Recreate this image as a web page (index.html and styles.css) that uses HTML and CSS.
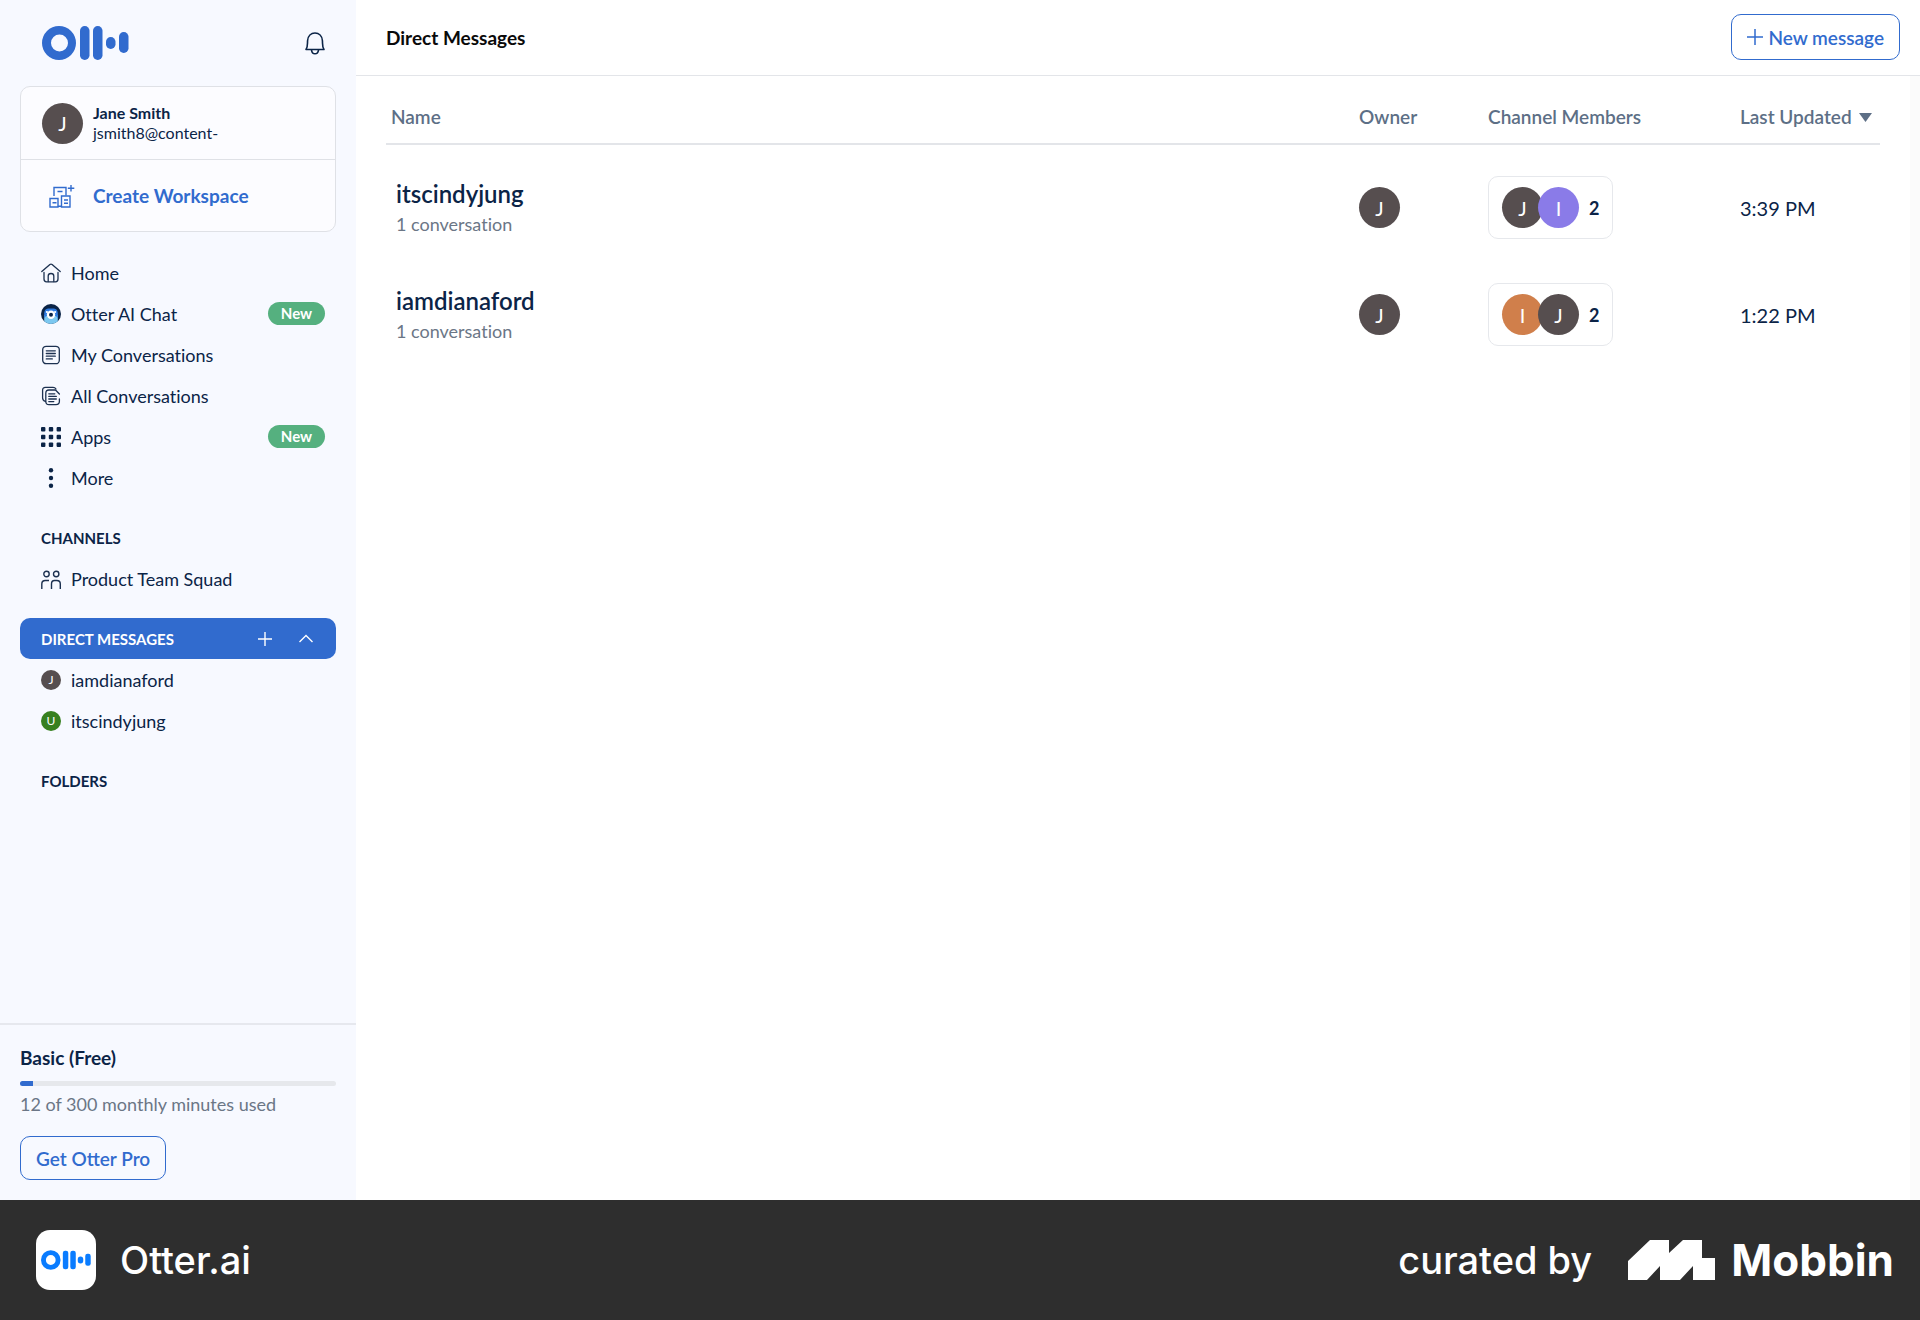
FILE: index.html
```html
<!DOCTYPE html>
<html lang="en">
<head>
  <meta charset="UTF-8" />
  <meta name="viewport" content="width=device-width, initial-scale=1" />
  <title>Direct Messages - Otter.ai</title>
  <link rel="stylesheet" href="styles.css">
</head>
<body>

<div class="app">
  <aside class="sidebar">
    <div class="sidebar-top">
      <a href="#" class="logo" aria-label="Otter">
        <svg width="87" height="34" viewBox="0 0 87 34" fill="#316bce">
          <path fill-rule="evenodd" d="M17 0a17 17 0 1 0 0 34a17 17 0 1 0 0-34zM17.500 8.500a8.500 8.500 0 1 1 0 17a8.500 8.500 0 1 1 0-17z"/>
          <rect x="38" y="0" width="9.500" height="34" rx="4.700"/>
          <rect x="51" y="0" width="9.500" height="34" rx="4.700"/>
          <rect x="64" y="11" width="9.500" height="12" rx="4.700"/>
          <rect x="77" y="6" width="9.500" height="21" rx="4.700"/>
        </svg>
      </a>
      <button class="icon-btn" aria-label="Notifications">
        <svg width="22" height="24" viewBox="0 0 22 24" fill="none" stroke="#0b2447" stroke-width="1.600" stroke-linejoin="round">
          <path d="M2 18.500C4 15.500 3.300 12.500 3.600 9.500C4 5 7 2 11 2S18 5 18.400 9.500C18.700 12.500 18 15.500 20 18.500Z"/>
          <path d="M7.500 19c.3 2.600 1.700 3.800 3.500 3.800s3.200-1.200 3.500-3.800"/>
        </svg>
      </button>
    </div>

    <div class="account">
      <div class="account-user">
        <span class="avatar">J</span>
        <div class="account-text">
          <strong>Jane Smith</strong>
          <span>jsmith8@content-</span>
        </div>
      </div>
      <a href="#" class="create-workspace">
        <svg width="26" height="24" viewBox="0 0 26 24" fill="none" stroke="#316bce" stroke-width="1.400">
          <path d="M5 12V3.500h12v8M8.500 7.500h5M22 1v6.500M18.800 4.200h6.500"/>
          <path d="M1 14.500h8V23H1zM3.500 18.800h4M12.500 12h8.500v11h-8.500zM15 16h4M15 19.300h4M9 22.300h4"/>
        </svg>
        Create Workspace
      </a>
    </div>

    <nav class="nav">
      <a href="#" class="nav-item">
        <svg width="20" height="20" viewBox="0 0 20 20" fill="none" stroke="#1c3150" stroke-width="1.300" stroke-linecap="round" stroke-linejoin="round">
          <path d="M.8 8.500L8.900 1.500q1.100-.9 2.200 0L19.200 8.500"/>
          <path d="M3 9.500V16q0 2.800 2.500 2.800h9Q17 18.800 17 16V9.500"/>
          <path d="M7.200 18.500V13q0-2.500 2.800-2.500t2.800 2.500v5.500"/>
        </svg>
        Home
      </a>
      <a href="#" class="nav-item">
        <svg width="20" height="20" viewBox="0 0 20 20">
          <circle cx="10" cy="10" r="10" fill="#0b2447"/>
          <path d="M3.200 17.300V11h13.600v6.300Q14 20 10 20t-6.800-2.700z" fill="#7cc8f0"/>
          <path d="M3.200 14V9Q3.500 5 7 4.600h6Q16.500 5 16.800 9v5q-1.500-2.500-3.500-2.500H6.700Q4.700 11.500 3.200 14z" fill="#2f7be0"/>
          <circle cx="5.900" cy="8" r="1.100" fill="#fff"/>
          <circle cx="14.100" cy="8" r="1.100" fill="#fff"/>
          <circle cx="10" cy="10.800" r="4.200" fill="#fff"/>
          <circle cx="10" cy="10.800" r="2" fill="#0b2447"/>
        </svg>
        Otter AI Chat
        <span class="badge">New</span>
      </a>
      <a href="#" class="nav-item">
        <svg width="20" height="20" viewBox="0 0 20 20" fill="none" stroke="#1c3150" stroke-width="1.300" stroke-linecap="round">
          <rect x="1.700" y="1.300" width="16.600" height="17.400" rx="3.500"/>
          <path d="M5.300 5.800h9M5.300 8.500h9M5.300 11.200h9M5.300 13.900h6"/>
        </svg>
        My Conversations
      </a>
      <a href="#" class="nav-item">
        <svg width="20" height="20" viewBox="0 0 20 20" fill="none" stroke="#1c3150" stroke-width="1.300" stroke-linecap="round" stroke-linejoin="round">
          <path d="M4.500 15.500Q1.600 14.500 1.600 12V4.200Q1.600 1.300 4.500 1.300H12q2 0 3 1.700"/>
          <path d="M18.400 13v2.300q0 3.400-3.400 3.400H8q-3.200 0-3.200-3.400V7.200Q4.800 4 8 4h6.500l3.900 4"/>
          <path d="M7.800 7.800h6M7.800 10.400h7.500M7.800 13h7.500M7.800 15.600h5"/>
        </svg>
        All Conversations
      </a>
      <a href="#" class="nav-item">
        <svg width="20" height="20" viewBox="0 0 20 20" fill="#0b2447">
          <rect x="0" y="0" width="4.400" height="4.400" rx="1"/><rect x="7.800" y="0" width="4.400" height="4.400" rx="1"/><rect x="15.600" y="0" width="4.400" height="4.400" rx="1"/>
          <rect x="0" y="7.800" width="4.400" height="4.400" rx="1"/><rect x="7.800" y="7.800" width="4.400" height="4.400" rx="1"/><rect x="15.600" y="7.800" width="4.400" height="4.400" rx="1"/>
          <rect x="0" y="15.600" width="4.400" height="4.400" rx="1"/><rect x="7.800" y="15.600" width="4.400" height="4.400" rx="1"/><rect x="15.600" y="15.600" width="4.400" height="4.400" rx="1"/>
        </svg>
        Apps
        <span class="badge">New</span>
      </a>
      <a href="#" class="nav-item">
        <svg width="20" height="20" viewBox="0 0 20 20" fill="#0b2447">
          <circle cx="10" cy="2.200" r="2.200"/><circle cx="10" cy="10" r="2.200"/><circle cx="10" cy="17.800" r="2.200"/>
        </svg>
        More
      </a>
    </nav>

    <section class="nav-section">
      <h2 class="section-title">CHANNELS</h2>
      <a href="#" class="nav-item">
        <svg width="20" height="20" viewBox="0 0 20 20" fill="none" stroke="#1c3150" stroke-width="1.400">
          <circle cx="5.500" cy="5" r="2.700"/>
          <circle cx="15.200" cy="5" r="2.700"/>
          <path d="M.8 20v-5Q.8 11.500 4.300 11.500H8M10.500 20v-5Q10.500 11.500 13.500 11.500h2.300q3.500 0 3.500 3.500V20"/>
        </svg>
        Product Team Squad
      </a>
    </section>

    <section class="nav-section">
      <div class="section-title active">
        <h2>DIRECT MESSAGES</h2>
        <button class="icon-btn" aria-label="Add direct message">
          <svg width="16" height="16" viewBox="0 0 16 16" stroke="#fff" stroke-width="1.400"><path d="M8 1v14M1 8h14"/></svg>
        </button>
        <button class="icon-btn" aria-label="Collapse">
          <svg width="16" height="16" viewBox="0 0 16 16" fill="none" stroke="#fff" stroke-width="1.400"><path d="M1.500 11L8 4.500L14.500 11"/></svg>
        </button>
      </div>
      <a href="#" class="nav-item"><span class="avatar small">J</span>iamdianaford</a>
      <a href="#" class="nav-item"><span class="avatar small green">U</span>itscindyjung</a>
    </section>

    <section class="nav-section">
      <h2 class="section-title">FOLDERS</h2>
    </section>

    <div class="plan">
      <h3>Basic (Free)</h3>
      <div class="progress" role="progressbar" aria-label="Minutes used" aria-valuenow="12" aria-valuemax="300">
        <div class="progress-fill" style="width: 4%"></div>
      </div>
      <p>12 of 300 monthly minutes used</p>
      <button class="btn">Get Otter Pro</button>
    </div>
  </aside>

  <main class="main">
    <header class="main-header">
      <h1>Direct Messages</h1>
      <button class="btn btn-new">
        <svg width="16" height="16" viewBox="0 0 16 16" stroke="#316bce" stroke-width="1.500"><path d="M8 0v16M0 8h16"/></svg>
        New message
      </button>
    </header>

    <div class="content">
      <table class="channels">
        <thead>
          <tr>
            <th class="col-name">Name</th>
            <th class="col-owner">Owner</th>
            <th class="col-members">Channel Members</th>
            <th class="col-updated">Last Updated <svg width="13" height="9" viewBox="0 0 13 9" fill="#5d6f86"><path d="M0 0h13L6.500 9z"/></svg></th>
          </tr>
        </thead>
        <tbody>
          <tr>
            <td class="name">
              <a href="#">itscindyjung</a>
              <span>1 conversation</span>
            </td>
            <td><span class="avatar">J</span></td>
            <td>
              <div class="members"><span class="avatar">J</span><span class="avatar purple">I</span><b>2</b></div>
            </td>
            <td class="time">3:39 PM</td>
          </tr>
          <tr>
            <td class="name">
              <a href="#">iamdianaford</a>
              <span>1 conversation</span>
            </td>
            <td><span class="avatar">J</span></td>
            <td>
              <div class="members"><span class="avatar orange">I</span><span class="avatar">J</span><b>2</b></div>
            </td>
            <td class="time">1:22 PM</td>
          </tr>
        </tbody>
      </table>
    </div>
  </main>
</div>

<footer class="footer">
  <div class="app-icon">
    <svg width="50" height="20" viewBox="0 0 87 34" fill="#0a7cff">
      <path fill-rule="evenodd" d="M17 0a17 17 0 1 0 0 34a17 17 0 1 0 0-34zM17 8.500a8.500 8.500 0 1 1 0 17a8.500 8.500 0 1 1 0-17z"/>
      <rect x="38" y="1" width="9.500" height="32" rx="4"/>
      <rect x="51" y="1" width="9.500" height="32" rx="4"/>
      <rect x="64" y="11" width="9.500" height="12" rx="4.700"/>
      <rect x="77" y="6" width="9.500" height="21" rx="4"/>
    </svg>
  </div>
  <span class="app-name">Otter.ai</span>
  <span class="curated">curated by</span>
  <svg width="87" height="40" viewBox="0 0 87 40" fill="#fff">
    <path d="M0 21L22 0H41V13L55 0H74V18H87V40H65V26L52 40H32V26L19 40H0Z"/>
  </svg>
  <span class="mobbin">Mobbin</span>
</footer>

</body>
</html>
```
FILE: styles.css
```css
* {
  box-sizing: border-box;
}
body {
  margin: 0;
  min-height: 100vh;
  display: flex;
  flex-direction: column;
  font-family: Lato, 'Open Sans', sans-serif;
  font-size: 18px;
  font-variant-ligatures: none;
  color: #0b2447;
  background: #fff;
}
h1, h2, h3, p {
  margin: 0;
}
a {
  color: inherit;
  text-decoration: none;
}
button {
  font-family: inherit;
  cursor: pointer;
}
svg {
  display: block;
  flex-shrink: 0;
}
.app {
  flex: 1;
  display: flex;
}

/* Sidebar */
.sidebar {
  width: 356px;
  flex-shrink: 0;
  display: flex;
  flex-direction: column;
  background: #f7f9ff;
}
.sidebar-top {
  display: flex;
  align-items: center;
  justify-content: space-between;
  height: 86px;
  padding: 0 30px 0 42px;
}
.icon-btn {
  padding: 0;
  border: none;
  background: none;
}
.account {
  margin: 0 20px;
  border: 1px solid #dfe1e6;
  border-radius: 10px;
  background: #fcfcff;
}
.account-user {
  display: flex;
  align-items: center;
  gap: 10px;
  height: 73px;
  padding: 0 21px;
  border-bottom: 1px solid #dfe1e6;
}
.account-text {
  display: flex;
  flex-direction: column;
  font-size: 16px;
  line-height: 20px;
}
.create-workspace {
  display: flex;
  align-items: center;
  gap: 18px;
  height: 71px;
  padding: 0 28px;
  color: #316bce;
  font-size: 19px;
  font-weight: 700;
}
.avatar {
  display: flex;
  align-items: center;
  justify-content: center;
  width: 41px;
  height: 41px;
  flex-shrink: 0;
  border-radius: 50%;
  background: #564e4f;
  color: #fff;
  font-size: 20px;
}
.avatar.small {
  width: 20px;
  height: 20px;
  font-size: 12px;
}
.avatar.green {
  background: #37801f;
}
.avatar.purple {
  background: #8a7be8;
}
.avatar.orange {
  background: #d07f4b;
}
.nav {
  margin-top: 20px;
}
.nav-item {
  display: flex;
  align-items: center;
  gap: 10px;
  height: 41px;
  padding: 0 31px 0 41px;
}
.badge {
  margin-left: auto;
  width: 57px;
  border-radius: 12px;
  background: #55b07f;
  color: #fff;
  font-size: 15px;
  font-weight: 700;
  line-height: 23px;
  text-align: center;
}
.nav-section {
  margin-top: 19px;
}
.section-title {
  display: flex;
  align-items: center;
  height: 41px;
  margin: 0 20px;
  padding: 0 21px;
  font-size: 15px;
  font-weight: 700;
}
.section-title h2 {
  flex: 1;
  font-size: 15px;
  font-weight: 700;
}
.section-title.active {
  gap: 25px;
  padding-right: 22px;
  border-radius: 10px;
  background: #316bce;
  color: #fff;
}
.plan {
  margin-top: auto;
  padding: 20px;
  border-top: 2px solid #e6e8ee;
}
.plan h3 {
  font-size: 19px;
  line-height: 26px;
}
.progress {
  height: 5px;
  margin: 10px 0 8px;
  border-radius: 3px;
  background: #e6e8ec;
  overflow: hidden;
}
.progress-fill {
  height: 100%;
  background: #316bce;
}
.plan p {
  margin-bottom: 22px;
  color: #6b7686;
  line-height: 20px;
}
.btn {
  display: inline-flex;
  align-items: center;
  gap: 5px;
  height: 44px;
  padding: 0 15px;
  border: 1px solid #316bce;
  border-radius: 10px;
  background: none;
  color: #316bce;
  font-size: 19px;
  font-weight: 600;
}

/* Main */
.main {
  flex: 1;
  display: flex;
  flex-direction: column;
}
.main-header {
  display: flex;
  align-items: center;
  justify-content: space-between;
  height: 76px;
  padding: 0 20px 1px 30px;
  border-bottom: 1px solid #e3e5e9;
}
.main-header h1 {
  color: #0a0a0a;
  font-size: 19px;
}
.btn-new {
  height: 46px;
}
.content {
  flex: 1;
  padding: 0 30px;
  border-right: 10px solid #fbfbfb;
}
.channels {
  width: 100%;
  table-layout: fixed;
  border-collapse: collapse;
}
.channels th {
  height: 68px;
  padding: 14px 0 0;
  border-bottom: 2px solid #e3e5e9;
  color: #5d6f86;
  font-size: 19px;
  font-weight: 600;
  text-align: left;
  white-space: nowrap;
}
.channels th svg {
  display: inline-block;
  margin-left: 3px;
  vertical-align: 2px;
}
.channels .col-name {
  padding-left: 5px;
}
.col-owner {
  width: 129px;
}
.col-members {
  width: 252px;
}
.col-updated {
  width: 140px;
}
.channels tbody::before {
  content: '';
  display: block;
  height: 9px;
}
.channels td {
  height: 107px;
  padding: 0;
}
.channels .name {
  padding-left: 10px;
}
.name a {
  display: block;
  font-size: 24px;
  font-weight: 600;
  line-height: 32px;
}
.name span {
  display: block;
  color: #6b7686;
  line-height: 28px;
}
.members {
  display: inline-flex;
  align-items: center;
  height: 63px;
  padding: 0 13px;
  border: 1px solid #e6e8ec;
  border-radius: 10px;
  vertical-align: middle;
}
.members .avatar + .avatar {
  margin-left: -5px;
}
.members b {
  margin-left: 10px;
}
.time {
  font-size: 20px;
}

/* Footer */
.footer {
  display: flex;
  align-items: center;
  height: 120px;
  padding: 0 26px 0 36px;
  background: #2e2e2e;
  color: #fff;
  font-family: Inter, sans-serif;
  font-size: 38px;
  font-weight: 500;
}
.app-icon {
  display: flex;
  align-items: center;
  justify-content: center;
  width: 60px;
  height: 60px;
  margin-right: 24px;
  border-radius: 14px;
  background: #fff;
}
.curated {
  margin-left: auto;
  margin-right: 36px;
}
.mobbin {
  margin-left: 16px;
  font-size: 44px;
  font-weight: 700;
}
```
